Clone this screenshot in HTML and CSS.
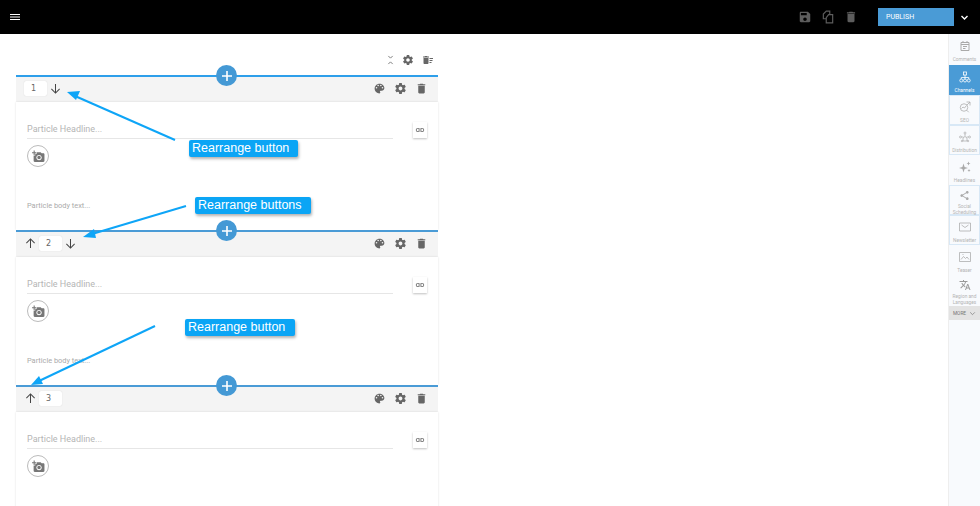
FILE: index.html
```html
<!DOCTYPE html>
<html lang="en">
<head>
<meta charset="utf-8">
<title>Particle editor</title>
<link rel="stylesheet" href="styles.css">
</head>
<body>
<svg class="defs" width="0" height="0" aria-hidden="true">
  <symbol id="i-palette" viewBox="0 0 24 24"><path d="M12 3c-4.97 0-9 4.03-9 9s4.03 9 9 9c.83 0 1.5-.67 1.5-1.5 0-.39-.15-.74-.39-1.01-.23-.26-.38-.61-.38-.99 0-.83.67-1.5 1.5-1.5H16c2.76 0 5-2.24 5-5 0-4.42-4.03-8-9-8zm-5.5 9c-.83 0-1.5-.67-1.5-1.5S5.67 9 6.5 9 8 9.67 8 10.5 7.33 12 6.5 12zm3-4C8.67 8 8 7.33 8 6.5S8.67 5 9.5 5s1.5.67 1.5 1.5S10.33 8 9.5 8zm5 0c-.83 0-1.5-.67-1.5-1.5S13.67 5 14.5 5s1.5.67 1.5 1.5S15.33 8 14.5 8zm3 4c-.83 0-1.5-.67-1.5-1.5S16.67 9 17.5 9s1.5.67 1.5 1.5-.67 1.5-1.5 1.5z"/></symbol>
  <symbol id="i-gear" viewBox="0 0 24 24"><path d="M19.43 12.98c.04-.32.07-.64.07-.98s-.03-.66-.07-.98l2.11-1.65c.19-.15.24-.42.12-.64l-2-3.46c-.12-.22-.39-.3-.61-.22l-2.49 1c-.52-.4-1.08-.73-1.69-.98l-.38-2.65C14.46 2.18 14.25 2 14 2h-4c-.25 0-.46.18-.49.42l-.38 2.65c-.61.25-1.17.59-1.69.98l-2.49-1c-.23-.09-.49 0-.61.22l-2 3.46c-.13.22-.07.49.12.64l2.11 1.65c-.04.32-.07.65-.07.98s.03.66.07.98l-2.11 1.65c-.19.15-.24.42-.12.64l2 3.46c.12.22.39.3.61.22l2.49-1c.52.4 1.08.73 1.69.98l.38 2.65c.03.24.24.42.49.42h4c.25 0 .46-.18.49-.42l.38-2.65c.61-.25 1.17-.59 1.69-.98l2.49 1c.23.09.49 0 .61-.22l2-3.46c.12-.22.07-.49-.12-.64l-2.11-1.65zM12 15.5c-1.93 0-3.5-1.57-3.5-3.5s1.57-3.5 3.5-3.5 3.5 1.57 3.5 3.5-1.57 3.5-3.5 3.5z"/></symbol>
  <symbol id="i-trash" viewBox="0 0 24 24"><path d="M6 19c0 1.1.9 2 2 2h8c1.1 0 2-.9 2-2V7H6v12zM19 4h-3.5l-1-1h-5l-1 1H5v2h14V4z"/></symbol>
  <symbol id="i-sweep" viewBox="0 0 24 24"><path d="M15 16h4v2h-4zm0-8h7v2h-7zm0 4h6v2h-6zM3 18c0 1.1.9 2 2 2h6c1.1 0 2-.9 2-2V8H3v10zM14 5h-3l-1-1H6L5 5H2v2h12z"/></symbol>
  <symbol id="i-link" viewBox="0 0 24 24"><path d="M3.9 12c0-1.71 1.39-3.1 3.1-3.1h4V7H7c-2.76 0-5 2.24-5 5s2.24 5 5 5h4v-1.9H7c-1.71 0-3.1-1.39-3.1-3.1zM8 13h8v-2H8v2zm9-6h-4v1.9h4c1.71 0 3.1 1.39 3.1 3.1s-1.39 3.1-3.1 3.1h-4V17h4c2.76 0 5-2.24 5-5s-2.24-5-5-5z"/></symbol>
  <symbol id="i-photo" viewBox="0 0 24 24"><path d="M3 4V1h2v3h3v2H5v3H3V6H0V4h3zm3 6V7h3V4h7l1.83 2H21c1.1 0 2 .9 2 2v12c0 1.1-.9 2-2 2H5c-1.1 0-2-.9-2-2V10h3zm7 9c2.76 0 5-2.24 5-5s-2.24-5-5-5-5 2.24-5 5 2.24 5 5 5zm-3.2-5c0 1.77 1.43 3.2 3.2 3.2s3.2-1.43 3.2-3.2-1.43-3.2-3.2-3.2-3.2 1.43-3.2 3.2z"/></symbol>
  <symbol id="i-down" viewBox="0 0 12 12"><path d="M6 1v10M1.5 6.5 6 11l4.500-4.500" fill="none" stroke="currentColor" stroke-width="1.100"/></symbol>
  <symbol id="i-up" viewBox="0 0 12 12"><path d="M6 11V1M1.500 5.500 6 1l4.500 4.500" fill="none" stroke="currentColor" stroke-width="1.100"/></symbol>
  <symbol id="i-plus" viewBox="0 0 12 12"><path d="M6 1v10M1 6h10" fill="none" stroke="currentColor" stroke-width="1.600"/></symbol>
  <symbol id="i-chev" viewBox="0 0 12 12"><path d="M2 4l4 4 4-4" fill="none" stroke="currentColor" stroke-width="1.800"/></symbol>
  <symbol id="i-chev-thin" viewBox="0 0 12 12"><path d="M2 4l4 4 4-4" fill="none" stroke="currentColor" stroke-width="1.200"/></symbol>
  <symbol id="i-save" viewBox="0 0 24 24"><path d="M17 3H5c-1.110 0-2 .9-2 2v14c0 1.100.89 2 2 2h14c1.100 0 2-.9 2-2V7l-4-4zm-5 16c-1.660 0-3-1.340-3-3s1.340-3 3-3 3 1.340 3 3-1.340 3-3 3zm3-10H5V5h10v4z"/></symbol>
  <symbol id="i-copy" viewBox="0 0 24 24"><path d="M9 15H4V7l5-5h6v5M15 8h5v14H9V13l4-5z" fill="none" stroke="currentColor" stroke-width="2"/></symbol>
  <symbol id="i-collapse" viewBox="0 0 12 16"><path d="M2.500 1.500 6 5l3.500-3.500M2.500 14.500 6 11l3.500 3.500" fill="none" stroke="currentColor" stroke-width="1.300"/></symbol>
  <symbol id="i-cal" viewBox="0 0 24 24"><path d="M4 5h16v16H4zM4 9h16M8 2v4M16 2v4M8 13h8M8 17h5" fill="none" stroke="currentColor" stroke-width="2"/></symbol>
  <symbol id="i-tree" viewBox="0 0 24 24"><g fill="none" stroke="currentColor" stroke-width="1.600"><rect x="9" y="2" width="6" height="6"/><circle cx="4.500" cy="19" r="3"/><circle cx="12" cy="19" r="3"/><circle cx="19.500" cy="19" r="3"/><path d="M12 8v8M4.500 16v-3h15v3"/></g></symbol>
  <symbol id="i-seo" viewBox="0 0 24 24"><g fill="none" stroke="currentColor" stroke-width="1.500"><circle cx="10" cy="13" r="7.500"/><path d="m15.500 18.500 4 4M5 15l3-3 3 2 3-4M15 2h7v7M22 2l-7 7"/></g></symbol>
  <symbol id="i-dist" viewBox="0 0 24 24"><g fill="none" stroke="currentColor" stroke-width="1.400"><circle cx="12" cy="4" r="2"/><circle cx="3" cy="12" r="2"/><circle cx="21" cy="12" r="2"/><path d="M8 20v-6l4-3 4 3v6zM5 12h4M15 12h4M12 6v5"/><circle cx="6" cy="20" r="1.500"/><circle cx="18" cy="20" r="1.500"/></g></symbol>
  <symbol id="i-spark" viewBox="0 0 24 24"><path d="M9 5l2.200 6.800L18 14l-6.800 2.200L9 23l-2.200-6.800L0 14l6.800-2.200zM19 1l1.200 2.800L23 5l-2.800 1.200L19 9l-1.200-2.800L15 5l2.800-1.200zM20 16l1 2 2 1-2 1-1 2-1-2-2-1 2-1z"/></symbol>
  <symbol id="i-share" viewBox="0 0 24 24"><path d="M18 16.080c-.76 0-1.440.3-1.960.77L8.910 12.700c.05-.23.09-.46.09-.7s-.04-.47-.09-.7l7.050-4.110c.54.5 1.250.81 2.040.81 1.660 0 3-1.340 3-3s-1.340-3-3-3-3 1.340-3 3c0 .24.04.47.09.7L8.040 9.810C7.500 9.310 6.790 9 6 9c-1.660 0-3 1.340-3 3s1.340 3 3 3c.79 0 1.500-.31 2.040-.81l7.120 4.160c-.05.21-.08.43-.08.65 0 1.610 1.310 2.920 2.920 2.920 1.610 0 2.920-1.310 2.920-2.920s-1.310-2.920-2.920-2.920z"/></symbol>
  <symbol id="i-mail" viewBox="0 0 24 24"><path d="M1 4h22v16H1zM5 8l7 5 7-5" fill="none" stroke="currentColor" stroke-width="1.500"/></symbol>
  <symbol id="i-pic" viewBox="0 0 24 24"><path d="M1 3h22v18H1zM4 17l5-6 4 4 3-3 4 5M7 7h2" fill="none" stroke="currentColor" stroke-width="1.500"/></symbol>
  <symbol id="i-lang" viewBox="0 0 24 24"><path d="M12.870 15.070l-2.540-2.510.03-.03c1.740-1.940 2.980-4.170 3.710-6.530H17V4h-7V2H8v2H1v1.990h11.170C11.500 7.920 10.440 9.750 9 11.350 8.070 10.320 7.300 9.190 6.690 8h-2c.73 1.630 1.730 3.170 2.980 4.560l-5.090 5.020L4 19l5-5 3.110 3.110.76-2.040zM18.500 10h-2L12 22h2l1.120-3h4.750L21 22h2l-4.500-12zm-2.620 7l1.620-4.330L19.120 17h-3.240z"/></symbol>
</svg>

<header class="topbar">
  <svg class="hamburger" viewBox="0 0 10 6"><path d="M0 .5h10M0 3h10M0 5.500h10" stroke="currentColor" stroke-width="1"/></svg>
  <div class="top-actions">
    <svg class="top-icon"><use href="#i-save"/></svg>
    <svg class="top-icon"><use href="#i-copy"/></svg>
    <svg class="top-icon"><use href="#i-trash"/></svg>
  </div>
  <button class="publish">PUBLISH</button>
  <svg class="publish-chev"><use href="#i-chev"/></svg>
</header>

<div class="workspace">
  <main class="editor">
    <div class="editor-tools">
      <svg class="tool tool-collapse"><use href="#i-collapse"/></svg>
      <svg class="tool tool-gear"><use href="#i-gear"/></svg>
      <svg class="tool tool-sweep"><use href="#i-sweep"/></svg>
    </div>

    <section class="particle">
      <button class="add"><svg><use href="#i-plus"/></svg></button>
      <div class="bar">
        <span class="num">1</span>
        <svg class="arrow"><use href="#i-down"/></svg>
        <div class="bar-tools">
          <svg class="tool"><use href="#i-palette"/></svg>
          <svg class="tool"><use href="#i-gear"/></svg>
          <svg class="tool"><use href="#i-trash"/></svg>
        </div>
      </div>
      <div class="body">
        <div class="headline-row">
          <div class="headline">Particle Headline...</div>
          <span class="link-btn"><svg><use href="#i-link"/></svg></span>
        </div>
        <span class="photo"><svg><use href="#i-photo"/></svg></span>
        <p class="text">Particle body text...</p>
      </div>
    </section>

    <section class="particle">
      <button class="add"><svg><use href="#i-plus"/></svg></button>
      <div class="bar">
        <svg class="arrow"><use href="#i-up"/></svg>
        <span class="num">2</span>
        <svg class="arrow"><use href="#i-down"/></svg>
        <div class="bar-tools">
          <svg class="tool"><use href="#i-palette"/></svg>
          <svg class="tool"><use href="#i-gear"/></svg>
          <svg class="tool"><use href="#i-trash"/></svg>
        </div>
      </div>
      <div class="body">
        <div class="headline-row">
          <div class="headline">Particle Headline...</div>
          <span class="link-btn"><svg><use href="#i-link"/></svg></span>
        </div>
        <span class="photo"><svg><use href="#i-photo"/></svg></span>
        <p class="text">Particle body text...</p>
      </div>
    </section>

    <section class="particle">
      <button class="add"><svg><use href="#i-plus"/></svg></button>
      <div class="bar">
        <svg class="arrow"><use href="#i-up"/></svg>
        <span class="num">3</span>
        <div class="bar-tools">
          <svg class="tool"><use href="#i-palette"/></svg>
          <svg class="tool"><use href="#i-gear"/></svg>
          <svg class="tool"><use href="#i-trash"/></svg>
        </div>
      </div>
      <div class="body">
        <div class="headline-row">
          <div class="headline">Particle Headline...</div>
          <span class="link-btn"><svg><use href="#i-link"/></svg></span>
        </div>
        <span class="photo"><svg><use href="#i-photo"/></svg></span>
      </div>
    </section>
  </main>

  <nav class="side">
    <a class="side-item first"><svg><use href="#i-cal"/></svg><span>Comments</span></a>
    <a class="side-item active"><svg><use href="#i-tree"/></svg><span>Channels</span></a>
    <a class="side-item framed"><svg><use href="#i-seo"/></svg><span>SEO</span></a>
    <a class="side-item framed"><svg><use href="#i-dist"/></svg><span>Distribution</span></a>
    <a class="side-item"><svg><use href="#i-spark"/></svg><span>Headlines</span></a>
    <a class="side-item framed social"><svg><use href="#i-share"/></svg><span>Social Scheduling</span></a>
    <a class="side-item framed"><svg><use href="#i-mail"/></svg><span>Newsletter</span></a>
    <a class="side-item"><svg><use href="#i-pic"/></svg><span>Teaser</span></a>
    <a class="side-item region"><svg><use href="#i-lang"/></svg><span>Region and Languages</span></a>
    <a class="more">MORE <svg><use href="#i-chev-thin"/></svg></a>
  </nav>
</div>

<svg class="pointers" viewBox="0 0 980 506" aria-hidden="true">
  <g class="pointer">
    <path d="M175 140 75 96"/><path class="head" d="M67 92l13-1-4 9z"/>
    <path d="M186 206 92 234"/><path class="head" d="M83 237l11-8 2 9z"/>
    <path d="M155 326 39 381"/><path class="head" d="M31 385l8-9 4 8z"/>
  </g>
</svg>
<div class="note note-a">Rearrange button</div>
<div class="note note-b">Rearrange buttons</div>
<div class="note note-c">Rearrange button</div>
</body>
</html>
```
FILE: styles.css
```css
* { box-sizing: border-box; }
html, body { height: 100%; }
body {
  margin: 0;
  overflow: hidden;
  background: #fff;
  font-family: Roboto, "Liberation Sans", sans-serif;
  color: #666;
}
svg { display: block; fill: currentColor; }
.defs { position: absolute; }

.topbar {
  height: 34px;
  background: #000;
  display: flex;
  align-items: center;
  padding-left: 10px;
}
.hamburger { width: 10px; height: 6px; color: #fff; }
.top-actions {
  display: flex;
  gap: 9px;
  margin-left: auto;
  color: #5d5d5d;
}
.top-icon { width: 14px; height: 14px; }
.publish {
  width: 76px;
  height: 18px;
  margin-left: 20px;
  padding: 0 0 0 8px;
  border: 0;
  background: #4a9bd6;
  color: #fff;
  font: 400 7px Roboto, sans-serif;
  text-align: left;
}
.publish-chev { width: 9px; height: 9px; margin: 0 11px 0 6px; color: #fff; }

.workspace { display: flex; height: 472px; overflow: hidden; }
.editor { width: 948px; padding: 0 0 0 16px; }
.editor-tools {
  width: 422px;
  height: 41px;
  padding: 20px 3px 0 0;
  display: flex;
  justify-content: flex-end;
  color: #666;
}
.editor-tools .tool { width: 12px; height: 12px; }
.editor-tools .tool-collapse { width: 9px; height: 10px; margin-top: 1px; }
.editor-tools .tool-gear { margin-left: 7px; }
.editor-tools .tool-sweep { width: 14px; margin-left: 7px; }

.particle {
  position: relative;
  width: 422px;
  height: 155px;
  border-top: 2px solid #4a9bd6;
}
.particle:first-of-type { border-top-color: #2e9fea; }
.particle:last-child { height: 200px; }

.add {
  position: absolute;
  left: 200px;
  top: -12px;
  width: 21px;
  height: 21px;
  padding: 4.500px;
  border: 0;
  border-radius: 50%;
  background: #4499d5;
  color: #fff;
  z-index: 1;
}
.add svg { width: 12px; height: 12px; }

.bar {
  height: 25px;
  padding: 4px 8px 0 8px;
  background: #f4f4f4;
  display: flex;
  align-items: flex-start;
  color: #444;
}
.num {
  width: 23px;
  height: 15px;
  margin-right: 2px;
  padding-left: 7px;
  border-radius: 2px;
  background: #fff;
  box-shadow: 0 0 1px #ccc;
  font: 8px/15px "DejaVu Sans", sans-serif;
  color: #666;
}
.arrow { width: 11px; height: 11px; margin: 2px 3px 0 1px; }
.bar-tools {
  display: flex;
  gap: 8px;
  margin-left: auto;
  padding: 1px 2px 0 0;
  color: #666;
}
.tool { width: 13px; height: 13px; }

.body {
  height: 128px;
  padding: 19px 10px 0 11px;
  box-shadow: 0 0 2px rgba(0,0,0,.12);
}
.particle:last-child .body { height: 180px; }
.headline-row { display: flex; align-items: flex-start; }
.headline {
  width: 366px;
  height: 18px;
  border-bottom: 1px solid #e6e6e6;
  font-size: 9px;
  line-height: 16px;
  color: #b5b5b5;
}
.link-btn {
  width: 14px;
  height: 16px;
  margin-left: 20px;
  margin-top: 1px;
  padding: 3px 2px;
  background: #fff;
  box-shadow: 0 1px 2px rgba(0,0,0,.25);
  color: #666;
}
.link-btn svg { width: 10px; height: 10px; }
.photo {
  display: block;
  width: 22px;
  height: 22px;
  margin-top: 6px;
  padding: 4px;
  border: 1px solid #bbb;
  border-radius: 50%;
  color: #777;
}
.photo svg { width: 13px; height: 13px; }
.text {
  margin: 33px 0 0;
  font-size: 7.400px;
  line-height: 12px;
  color: #aaa;
}

.side {
  width: 32px;
  background: #f8fafd;
  border-left: 1px solid #eee;
}
.side-item {
  height: 30px;
  padding-top: 6px;
  display: flex;
  flex-direction: column;
  align-items: center;
  color: #b4b4b4;
  font-size: 4.800px;
  line-height: 5.500px;
  text-align: center;
}
.side-item.first { height: 31px; }
.side-item svg { width: 12px; height: 12px; margin-bottom: 5px; flex: none; color: #aaa; }
.side-item.social { padding-top: 5px; }
.side-item.social svg { width: 11px; height: 11px; margin-bottom: 3px; }
.side-item.region { height: 31px; padding-top: 4px; }
.side-item.region svg { margin-bottom: 3px; color: #999; }
.side-item.active { background: #4a9bd6; color: #fff; }
.side-item.active svg { color: #fff; }
.side-item.framed { box-shadow: inset 0 0 0 1px #d8e8f6; }
.more {
  height: 14px;
  background: #e3e3e3;
  display: flex;
  align-items: center;
  justify-content: center;
  gap: 3px;
  font-size: 4.800px;
  color: #777;
}
.more svg { width: 7px; height: 7px; }

.pointers {
  position: absolute;
  left: 0;
  top: 0;
  width: 980px;
  height: 506px;
  pointer-events: none;
}
.pointer path { fill: none; stroke: #0ea5f7; stroke-width: 2; }
.pointer .head { fill: #0ea5f7; stroke: none; }
.note {
  position: absolute;
  height: 17px;
  padding-left: 3px;
  border-radius: 2px;
  background: #0ba5f5;
  box-shadow: 1px 2px 3px rgba(0,0,0,.3);
  color: #fff;
  font: 12.500px/16px "Liberation Sans", sans-serif;
}
.note-a { left: 189px; top: 140px; width: 109px; }
.note-b { left: 195px; top: 197px; width: 116px; }
.note-c { left: 185px; top: 319px; width: 110px; }
```
